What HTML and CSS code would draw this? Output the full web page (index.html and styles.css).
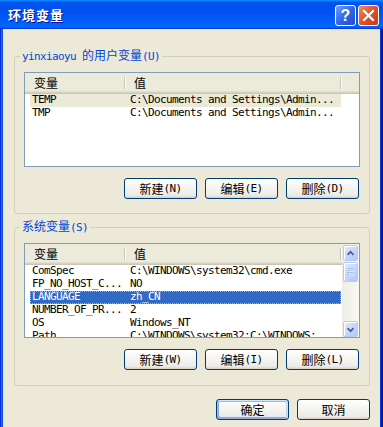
FILE: index.html
```html
<!DOCTYPE html>
<html lang="zh-CN">
<head>
    <meta charset="UTF-8">
    <title>环境变量</title>
    <link rel="stylesheet" href="styles.css">
</head>
<body>

<div class="window">
    <div class="title-bar">
        <div class="title-text">环境变量</div>
        <div class="title-controls">
            <div class="ctl help"><span>?</span></div>
            <div class="ctl close">
                <svg width="19" height="19" viewBox="0 0 19 19">
                    <path d="M5 5 L14 14 M14 5 L5 14" stroke="#fff" stroke-width="2.2" stroke-linecap="square" fill="none"/>
                </svg>
            </div>
        </div>
    </div>

    <div class="window-body">
        <fieldset class="group">
            <legend>yinxiaoyu <span class="cn">的用户变量</span>(U)</legend>
            <div class="list">
                <div class="list-main">
                    <div class="list-head">
                        <div class="hcol hcol-name"><span class="cn">变量</span></div>
                        <div class="hcol hcol-value"><span class="cn">值</span></div>
                    </div>
                    <div class="row row-dim">
                        <span class="cell name">TEMP</span>
                        <span class="cell value">C:\Documents and Settings\Admin...</span>
                    </div>
                    <div class="row">
                        <span class="cell name">TMP</span>
                        <span class="cell value">C:\Documents and Settings\Admin...</span>
                    </div>
                </div>
            </div>
            <div class="buttons">
                <div class="btn"><span class="cn">新建</span>(N)</div>
                <div class="btn"><span class="cn">编辑</span>(E)</div>
                <div class="btn"><span class="cn">删除</span>(D)</div>
            </div>
        </fieldset>

        <fieldset class="group group-system">
            <legend><span class="cn">系统变量</span>(S)</legend>
            <div class="list">
                <div class="list-main">
                    <div class="list-head">
                        <div class="hcol hcol-name"><span class="cn">变量</span></div>
                        <div class="hcol hcol-value"><span class="cn">值</span></div>
                    </div>
                    <div class="row">
                        <span class="cell name">ComSpec</span>
                        <span class="cell value">C:\WINDOWS\system32\cmd.exe</span>
                    </div>
                    <div class="row">
                        <span class="cell name">FP_NO_HOST_C...</span>
                        <span class="cell value">NO</span>
                    </div>
                    <div class="row row-selected">
                        <span class="cell name">LANGUAGE</span>
                        <span class="cell value">zh_CN</span>
                    </div>
                    <div class="row">
                        <span class="cell name">NUMBER_OF_PR...</span>
                        <span class="cell value">2</span>
                    </div>
                    <div class="row">
                        <span class="cell name">OS</span>
                        <span class="cell value">Windows_NT</span>
                    </div>
                    <div class="row">
                        <span class="cell name">Path</span>
                        <span class="cell value">C:\WINDOWS\system32;C:\WINDOWS;...</span>
                    </div>
                </div>
                <div class="scrollbar">
                    <div class="sb-btn">
                        <svg width="15" height="15" viewBox="0 0 15 15">
                            <polyline points="4,9 7.5,5.5 11,9" stroke="#4d6185" stroke-width="2" fill="none"/>
                        </svg>
                    </div>
                    <div class="sb-thumb">
                        <svg width="15" height="18" viewBox="0 0 15 18">
                            <path d="M4 5.5 H11 M4 7.5 H11 M4 9.5 H11 M4 11.5 H11" stroke="#8ea6df" stroke-width="1"/>
                            <path d="M5 6.5 H12 M5 8.5 H12 M5 10.5 H12 M5 12.5 H12" stroke="#eef3fe" stroke-width="1"/>
                        </svg>
                    </div>
                    <div class="sb-track"></div>
                    <div class="sb-btn">
                        <svg width="15" height="15" viewBox="0 0 15 15">
                            <polyline points="4,6 7.5,9.5 11,6" stroke="#4d6185" stroke-width="2" fill="none"/>
                        </svg>
                    </div>
                </div>
            </div>
            <div class="buttons">
                <div class="btn"><span class="cn">新建</span>(W)</div>
                <div class="btn"><span class="cn">编辑</span>(I)</div>
                <div class="btn"><span class="cn">删除</span>(L)</div>
            </div>
        </fieldset>

        <div class="dialog-buttons">
            <div class="btn btn-default"><span class="cn">确定</span></div>
            <div class="btn"><span class="cn">取消</span></div>
        </div>
    </div>
</div>

</body>
</html>
```

FILE: styles.css
```css
body {
    margin: 0;
    background-color: #ece9d8;
    overflow: hidden;
}
.window {
    width: 383px;
    height: 427px;
    overflow: hidden;
    background-color: #ece9d8;
    font-family: "DejaVu Sans Mono", "Noto Sans CJK SC", monospace;
    font-size: 11px;
    letter-spacing: -0.62px;
    color: #000;
}
.cn {
    font-family: "Noto Sans CJK SC", sans-serif;
    font-size: 12px;
    letter-spacing: 0;
}

/* title bar */
.title-bar {
    height: 29px;
    display: flex;
    justify-content: space-between;
    background: linear-gradient(180deg, #0997ff, #0053ee 8%, #0050ee 40%, #0066ff 88%, #0066ff 93%, #005bff 95%, #003dd7 96%, #003dd7);
}
.title-text {
    padding: 1px 0 0 8px;
    line-height: 28px;
    font-family: "Noto Sans CJK SC", sans-serif;
    font-size: 13px;
    font-weight: bold;
    letter-spacing: 1px;
    color: #fff;
    text-shadow: 1px 1px #0f1089;
}
.title-controls {
    display: flex;
    gap: 2px;
    padding: 5px 4px 0 0;
}
.ctl {
    width: 19px;
    height: 19px;
    border: 1px solid #fff;
    border-radius: 3px;
    display: flex;
    align-items: center;
    justify-content: center;
}
.help {
    background: linear-gradient(135deg, #6f9dfb, #2d63e3 55%, #1f4fcf);
}
.help span {
    font-family: "Liberation Sans", sans-serif;
    font-weight: bold;
    font-size: 16px;
    line-height: 19px;
    letter-spacing: 0;
    color: #fff;
}
.close {
    background: linear-gradient(135deg, #ef8a66, #e0502a 50%, #c53a17);
}

/* body */
.window-body {
    height: 398px;
    padding: 19px 13px 0 14px;
    box-shadow: inset 1px 0 #0831d9, inset 2px 0 #166aee, inset 3px 0 #0855dd,
                inset -1px 0 #00138c, inset -2px 0 #001ea0, inset -3px 0 #003bda;
}
.group {
    margin: 0;
    padding: 8px 9px 14px 9px;
    border: 1px solid #d0d0bf;
    border-radius: 3px;
    min-width: 0;
}
.group legend {
    margin-left: -4px;
    padding: 0 2px;
    line-height: 14px;
    color: #0046d5;
}
.group-system {
    margin-top: 5px;
    padding-bottom: 15px;
}

/* list view */
.list {
    height: 93px;
    border: 1px solid #7f9db9;
    background-color: #fff;
    display: flex;
    overflow: hidden;
}
.list-main {
    flex: 1;
    overflow: hidden;
}
.list-head {
    height: 21px;
    display: flex;
    background: linear-gradient(180deg, #ebeadb 0, #ebeadb 18px, #e2decd 18px, #e2decd 19px, #d6d2c2 19px, #d6d2c2 20px, #cbc7b8 20px);
}
.hcol {
    position: relative;
    box-sizing: border-box;
    padding-left: 9px;
    line-height: 19px;
}
.hcol::after {
    content: "";
    position: absolute;
    right: 0;
    top: 4px;
    height: 12px;
    width: 1px;
    background-color: #c7c5b2;
    box-shadow: 1px 0 #fff;
}
.hcol-name {
    width: 100px;
}
.hcol-value {
    width: 216px;
}
.row {
    width: 311px;
    margin-left: 5px;
    height: 13px;
    display: flex;
    white-space: nowrap;
}
.cell {
    height: 13px;
    line-height: 11px;
}
.cell.name {
    width: 94px;
    padding-left: 2px;
    box-sizing: border-box;
}
.cell.value {
    padding-left: 6px;
}
.row-dim {
    background-color: #ece9d8;
}
.row-selected {
    background-color: #316ac5;
    color: #fff;
    outline: 1px dotted #e9a53c;
    outline-offset: -1px;
}

/* scrollbar */
.scrollbar {
    width: 17px;
    display: flex;
    flex-direction: column;
    background: linear-gradient(90deg, #eeede5, #f8f7f3);
}
.sb-btn, .sb-thumb {
    margin: 1px 1px 0 1px;
    width: 13px;
    height: 14px;
    border: 1px solid #b8cbf5;
    border-radius: 2px;
    background: linear-gradient(135deg, #e4ecfe, #c2d3fb 60%, #b3c8f7);
    box-shadow: inset 1px 1px #fff;
    display: flex;
    align-items: center;
    justify-content: center;
    overflow: hidden;
}
.sb-thumb {
    height: 18px;
}
.sb-track {
    flex: 1;
}

/* buttons */
.buttons {
    display: flex;
    justify-content: flex-end;
    gap: 8px;
    margin-top: 11px;
    margin-right: 1px;
}
.dialog-buttons {
    display: flex;
    justify-content: flex-end;
    gap: 8px;
    margin-top: 13px;
}
.btn {
    width: 71px;
    height: 19px;
    border: 1px solid #003c74;
    border-radius: 3px;
    background: linear-gradient(180deg, #fff, #ecebe6 86%, #d6d0c5);
    display: flex;
    align-items: center;
    justify-content: center;
    line-height: 19px;
}
.btn-default {
    box-shadow: inset -1px 1px #cee7ff, inset 1px 2px #98b8ea, inset -2px 2px #bcd4f6, inset 1px -1px #89ade4, inset 2px -2px #89ade4;
}
```
